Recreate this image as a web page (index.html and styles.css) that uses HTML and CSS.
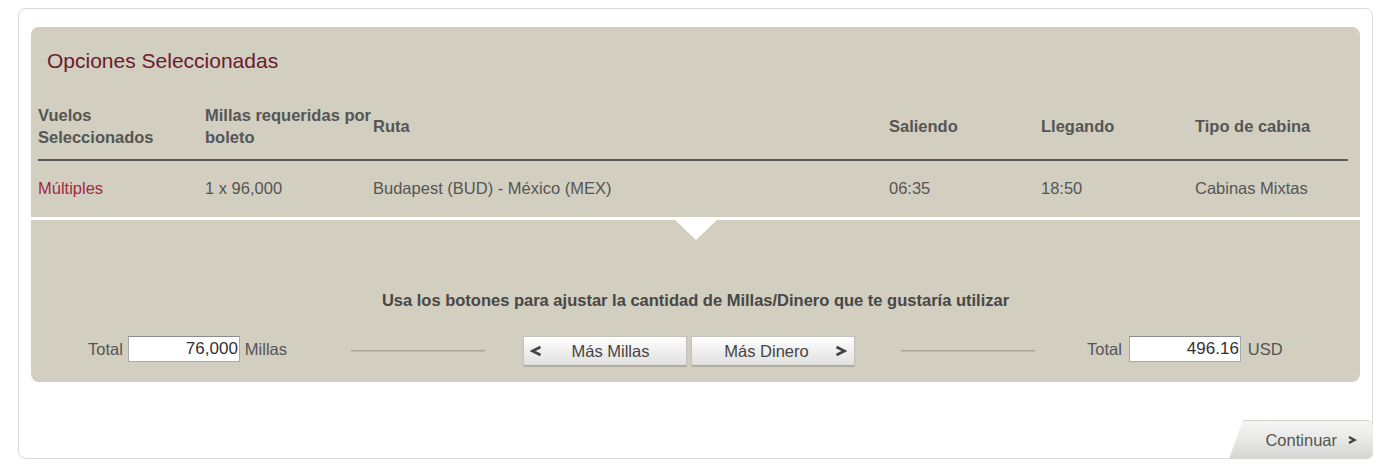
FILE: index.html
```html
<!DOCTYPE html>
<html lang="es">
<head>
    <meta charset="UTF-8">
    <title>Opciones Seleccionadas</title>
    <link rel="stylesheet" href="styles.css">
</head>
<body>
    <div class="card">
        <!-- Panel de opciones -->
        <div class="panel">
            <h2 class="panel-title">Opciones Seleccionadas</h2>

            <div class="flights">
                <div class="row head">
                    <div>Vuelos<br>Seleccionados</div>
                    <div>Millas requeridas por<br>boleto</div>
                    <div>Ruta</div>
                    <div>Saliendo</div>
                    <div>Llegando</div>
                    <div>Tipo de cabina</div>
                </div>
                <div class="row data">
                    <div class="multi">Múltiples</div>
                    <div>1 x 96,000</div>
                    <div>Budapest (BUD) - México (MEX)</div>
                    <div>06:35</div>
                    <div>18:50</div>
                    <div>Cabinas Mixtas</div>
                </div>
            </div>

            <div class="adjust">
                <span class="arrow"></span>
                <p class="hint">Usa los botones para ajustar la cantidad de Millas/Dinero que te gustaría utilizar</p>

                <div class="controls">
                    <div class="total total-miles">
                        <span>Total</span>
                        <input type="text" value="76,000">
                        <span>Millas</span>
                    </div>
                    <div class="rule"></div>
                    <div class="buttons">
                        <button class="btn">
                            <svg class="chev" width="12" height="12" viewBox="0 0 12 12"><polyline points="10.5,2 2.5,6 10.5,10" fill="none" stroke="#444" stroke-width="2.6"/></svg>
                            <span>Más Millas</span>
                        </button>
                        <button class="btn">
                            <span>Más Dinero</span>
                            <svg class="chev" width="12" height="12" viewBox="0 0 12 12"><polyline points="1.5,2 9.5,6 1.5,10" fill="none" stroke="#444" stroke-width="2.6"/></svg>
                        </button>
                    </div>
                    <div class="rule rule-right"></div>
                    <div class="total total-money">
                        <span>Total</span>
                        <input type="text" value="496.16">
                        <span>USD</span>
                    </div>
                </div>
            </div>
        </div>

        <!-- Continuar -->
        <a class="continue" href="#">
            <span>Continuar</span>
            <svg width="10" height="10" viewBox="0 0 10 10"><polyline points="2,2 7.5,5 2,8" fill="none" stroke="#444" stroke-width="2.4"/></svg>
        </a>
    </div>
</body>
</html>
```

FILE: styles.css
```css
/* Reset */
* {
    margin: 0;
    padding: 0;
    box-sizing: border-box;
}

body {
    font-family: 'Liberation Sans', Arial, sans-serif;
    font-size: 16.5px;
    color: #555;
    background: #fff;
}

/* Card */
.card {
    position: relative;
    margin: 8px 18px 0;
    height: 451px;
    border: 1px solid #d9d9d9;
    border-radius: 8px;
    padding: 18px 12px 0;
}

/* Panel */
.panel {
    background: #d2cec0;
    border-radius: 8px;
    height: 355px;
}

.panel-title {
    font-size: 21px;
    font-weight: 400;
    line-height: 24px;
    color: #6a1b2f;
    padding: 22px 0 0 16px;
}

/* Flights table */
.flights {
    margin: 26px 12px 0 7px;
}

.row {
    display: grid;
    grid-template-columns: 167px 168px 516px 152px 154px 1fr;
    align-items: center;
    line-height: 22px;
}

.row > div {
    white-space: nowrap;
}

.head {
    font-weight: 700;
    color: #555;
    padding: 5px 0 11px;
    border-bottom: 2px solid #5b5b5b;
}

.data {
    padding: 16px 0 18px;
}

.multi {
    color: #a02a40;
}

/* Adjust section */
.adjust {
    position: relative;
    border-top: 3px solid #fff;
    padding-top: 69px;
}

.arrow {
    position: absolute;
    top: 0;
    left: 50%;
    margin-left: -21px;
    border-left: 21px solid transparent;
    border-right: 21px solid transparent;
    border-top: 20px solid #fff;
}

.hint {
    text-align: center;
    font-weight: 700;
    color: #474747;
    line-height: 22px;
}

.controls {
    display: flex;
    align-items: center;
    padding-left: 57px;
    margin-top: 21px;
}

.total {
    display: flex;
    align-items: center;
    gap: 5px;
}

.total input {
    width: 112px;
    height: 26px;
    border: 1px solid #a9a9a9;
    border-top-color: #8c8c8c;
    background: #fff;
    font-family: 'Liberation Sans', Arial, sans-serif;
    font-size: 17px;
    color: #333;
    text-align: right;
    padding: 0 1px;
}

.total-miles {
    width: 263px;
}

.rule {
    width: 134px;
    height: 2px;
    border-top: 1px solid #a8a598;
    border-bottom: 1px solid #bcb9ad;
    margin-top: 4px;
}

.buttons {
    display: flex;
    gap: 4px;
    margin-left: 38px;
    margin-top: 4px;
}

.btn {
    display: flex;
    align-items: center;
    justify-content: space-between;
    width: 164px;
    height: 30px;
    padding: 0 7px 0 6px;
    border: 1px solid #c4c2ba;
    border-bottom-color: #a9a79f;
    border-radius: 2px;
    background: linear-gradient(#ffffff, #ececeb 60%, #e0e0de);
    box-shadow: 0 1px 1px rgba(0, 0, 0, 0.15);
    font-family: 'Liberation Sans', Arial, sans-serif;
    font-size: 16.5px;
    color: #444;
    cursor: pointer;
}

.btn span {
    flex: 1;
    text-align: center;
}

.btn .chev {
    flex: none;
}

.rule-right {
    margin-left: 46px;
}

.total-money {
    margin-left: 52px;
    gap: 7px;
}

/* Continuar tab */
.continue {
    position: absolute;
    right: -1px;
    bottom: -1px;
    width: 144px;
    height: 39px;
    display: flex;
    align-items: center;
    justify-content: flex-end;
    gap: 10px;
    padding-right: 16px;
    text-decoration: none;
    color: #555;
    background: linear-gradient(#f6f6f4, #e6e6e4 55%, #d4d4d2);
    border-top: 1px solid #d0d0d0;
    border-radius: 0 6px 6px 0;
    clip-path: polygon(14px 0, 100% 0, 100% 100%, 0 100%);
}
```
